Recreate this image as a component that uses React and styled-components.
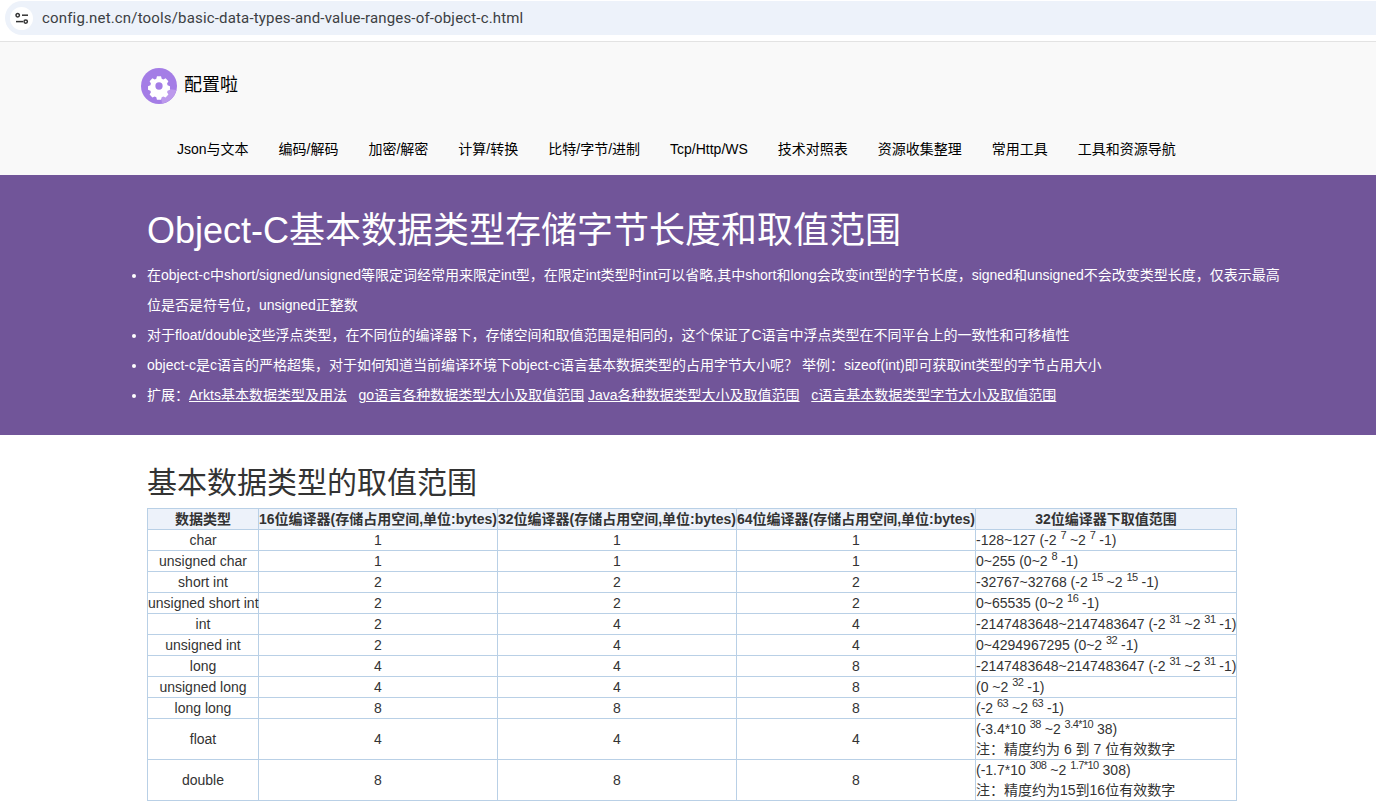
import React from "react";
import styled, { createGlobalStyle } from "styled-components";

const Global = createGlobalStyle`
  html, body { margin: 0; padding: 0; background: #fff; }
  body { font-family: "Liberation Sans", "Noto Sans CJK SC", sans-serif; font-size: 14px; color: #333; overflow: hidden; }
`;
const Chrome = styled.div`
  background: #fff; border-bottom: 1px solid #e3e3e3;
  padding: 1px 0 0 5px; box-sizing: border-box; height: 42px;
`;
const Pill = styled.div`
  height: 34px; background: #edf2fa; border-radius: 17px 0 0 17px; display: flex; align-items: center; padding-left: 5px;
`;
const TuneBadge = styled.span`
  width: 23px; height: 23px; border-radius: 50%; background: #fff; display: flex; align-items: center; justify-content: center;
`;
const Url = styled.span`
  font-family: "Roboto", "Liberation Sans", sans-serif; font-size: 15px; color: #3c4043; margin-left: 9px; letter-spacing: 0.165px;
`;
const Header = styled.header`
  height: 133px; background: #f9f9f9; padding: 26px 0 0 141px; box-sizing: border-box;
`;
const Brand = styled.div`
  display: flex; align-items: center; gap: 7px; height: 36px; font-size: 18px; color: #000;
`;
const BrandName = styled.span`
  line-height: 20px; margin-bottom: 3px;
`;
const Nav = styled.nav`
  display: flex; gap: 30px; margin: 35px 0 0 36px; line-height: 20px;
`;
const NavItem = styled.a`
  color: #000; font-size: 14px; white-space: nowrap;
`;
const Banner = styled.section`
  height: 260px; background: #715599; color: #fff; box-sizing: border-box; padding-top: 31px;
`;
const Title = styled.h1`
  margin: 0 0 0 147px; font-size: 36px; font-weight: 400; line-height: 50px;
`;
const Notes = styled.ul`
  margin: 4px 0 0; padding: 0 90px 0 147px; line-height: 30px; font-size: 14px;
`;
const Ext = styled.a`
  color: #fff; text-decoration: underline;
`;
const Content = styled.main`
  padding: 26px 0 0 147px;
`;
const Sub = styled.h2`
  margin: 0 0 3px; font-size: 30px; font-weight: 400; line-height: 44px; color: #333;
`;
const Grid = styled.table`
  width: 1089px; table-layout: fixed; border-collapse: collapse; font-size: 14px; line-height: 20px; color: #333;
`;
const Th = styled.th`
  background: #edf2fa; border: 1px solid #b9d0e6; padding: 0; font-weight: 700; text-align: center; white-space: nowrap; height: 20px;
`;
const Td = styled.td`
  border: 1px solid #b9d0e6; padding: 0; text-align: ${p => (p.$left ? "left" : "center")}; white-space: nowrap; height: 20px;
`;
const Sup = styled.sup`
  font-size: 11px; letter-spacing: -0.55px; line-height: 0; vertical-align: 6px;
`;

const TuneIcon = () => (
  <svg width="15" height="15" viewBox="0 0 15 15" fill="none" stroke="#333" strokeWidth="1.5">
    <circle cx="3.7" cy="4.2" r="1.7" />
    <path d="M8 4.2h6" />
    <path d="M2 10.6h7" />
    <circle cx="11.7" cy="10.6" r="1.7" />
  </svg>
);

const Logo = () => (
  <svg width="36" height="36" viewBox="0 0 36 36">
    <circle cx="18" cy="18" r="18" fill="#a47de6" />
    <path d="M19 20 L35.5 22 A18 18 0 0 1 21 35.7 Z" fill="#bc99ec" />
    <g transform="translate(18 18) scale(0.93)">
      <path fill="#fff" fillRule="evenodd" d="M-2.2-10.2h4.4l.7 2.7 1.7.8 2.5-1.2 3 3.2-1.4 2.4.5 1.8 2.6 1v3.8l-2.6 1-.5 1.8 1.4 2.4-3 3.2-2.5-1.2-1.7.8-.7 2.7h-4.4l-.7-2.7-1.7-.8-2.5 1.2-3-3.2 1.4-2.4-.5-1.8-2.6-1v-3.8l2.6-1 .5-1.8-1.4-2.4 3-3.2 2.5 1.2 1.7-.8z" transform="translate(0 -.3)" />
      <circle r="3.9" fill="#a47de6" />
    </g>
  </svg>
);

const navItems = ["Json与文本", "编码/解码", "加密/解密", "计算/转换", "比特/字节/进制", "Tcp/Http/WS", "技术对照表", "资源收集整理", "常用工具", "工具和资源导航"];

const rows = [
  ["char", 1, 1, 1, <>-128~127 (-2 <Sup>7</Sup> ~2 <Sup>7</Sup> -1)</>],
  ["unsigned char", 1, 1, 1, <>0~255 (0~2 <Sup>8</Sup> -1)</>],
  ["short int", 2, 2, 2, <>-32767~32768 (-2 <Sup>15</Sup> ~2 <Sup>15</Sup> -1)</>],
  ["unsigned short int", 2, 2, 2, <>0~65535 (0~2 <Sup>16</Sup> -1)</>],
  ["int", 2, 4, 4, <>-2147483648~2147483647 (-2 <Sup>31</Sup> ~2 <Sup>31</Sup> -1)</>],
  ["unsigned int", 2, 4, 4, <>0~4294967295 (0~2 <Sup>32</Sup> -1)</>],
  ["long", 4, 4, 8, <>-2147483648~2147483647 (-2 <Sup>31</Sup> ~2 <Sup>31</Sup> -1)</>],
  ["unsigned long", 4, 4, 8, <>(0 ~2 <Sup>32</Sup> -1)</>],
  ["long long", 8, 8, 8, <>(-2 <Sup>63</Sup> ~2 <Sup>63</Sup> -1)</>],
  ["float", 4, 4, 4, <>(-3.4*10 <Sup>38</Sup> ~2 <Sup>3.4*10</Sup> 38)<br />注：精度约为 6 到 7 位有效数字</>],
  ["double", 8, 8, 8, <>(-1.7*10 <Sup>308</Sup> ~2 <Sup>1.7*10</Sup> 308)<br />注：精度约为15到16位有效数字</>],
];

export default function App() {
  return (
    <>
      <Global />
      <Chrome>
        <Pill>
          <TuneBadge><TuneIcon /></TuneBadge>
          <Url>config.net.cn/tools/basic-data-types-and-value-ranges-of-object-c.html</Url>
        </Pill>
      </Chrome>
      <Header>
        <Brand><Logo /><BrandName>配置啦</BrandName></Brand>
        <Nav>{navItems.map(n => <NavItem key={n}>{n}</NavItem>)}</Nav>
      </Header>
      <Banner>
        <Title>Object-C基本数据类型存储字节长度和取值范围</Title>
        <Notes>
          <li>在object-c中short/signed/unsigned等限定词经常用来限定int型，在限定int类型时int可以省略,其中short和long会改变int型的字节长度，signed和unsigned不会改变类型长度，仅表示最高位是否是符号位，unsigned正整数</li>
          <li>对于float/double这些浮点类型，在不同位的编译器下，存储空间和取值范围是相同的，这个保证了C语言中浮点类型在不同平台上的一致性和可移植性</li>
          <li>object-c是c语言的严格超集，对于如何知道当前编译环境下object-c语言基本数据类型的占用字节大小呢？ 举例：sizeof(int)即可获取int类型的字节占用大小</li>
          <li>扩展：<Ext>Arkts基本数据类型及用法</Ext>&nbsp;&nbsp; <Ext>go语言各种数据类型大小及取值范围</Ext> <Ext>Java各种数据类型大小及取值范围</Ext>&nbsp;&nbsp; <Ext>c语言基本数据类型字节大小及取值范围</Ext></li>
        </Notes>
      </Banner>
      <Content>
        <Sub>基本数据类型的取值范围</Sub>
        <Grid>
          <colgroup>
            <col style={{ width: 111 }} />
            <col style={{ width: 239 }} />
            <col style={{ width: 239 }} />
            <col style={{ width: 239 }} />
            <col style={{ width: 261 }} />
          </colgroup>
          <thead>
            <tr>
              <Th>数据类型</Th>
              <Th>16位编译器(存储占用空间,单位:bytes)</Th>
              <Th>32位编译器(存储占用空间,单位:bytes)</Th>
              <Th>64位编译器(存储占用空间,单位:bytes)</Th>
              <Th>32位编译器下取值范围</Th>
            </tr>
          </thead>
          <tbody>
            {rows.map(r => (
              <tr key={r[0]}>
                <Td>{r[0]}</Td>
                <Td>{r[1]}</Td>
                <Td>{r[2]}</Td>
                <Td>{r[3]}</Td>
                <Td $left>{r[4]}</Td>
              </tr>
            ))}
          </tbody>
        </Grid>
      </Content>
    </>
  );
}
